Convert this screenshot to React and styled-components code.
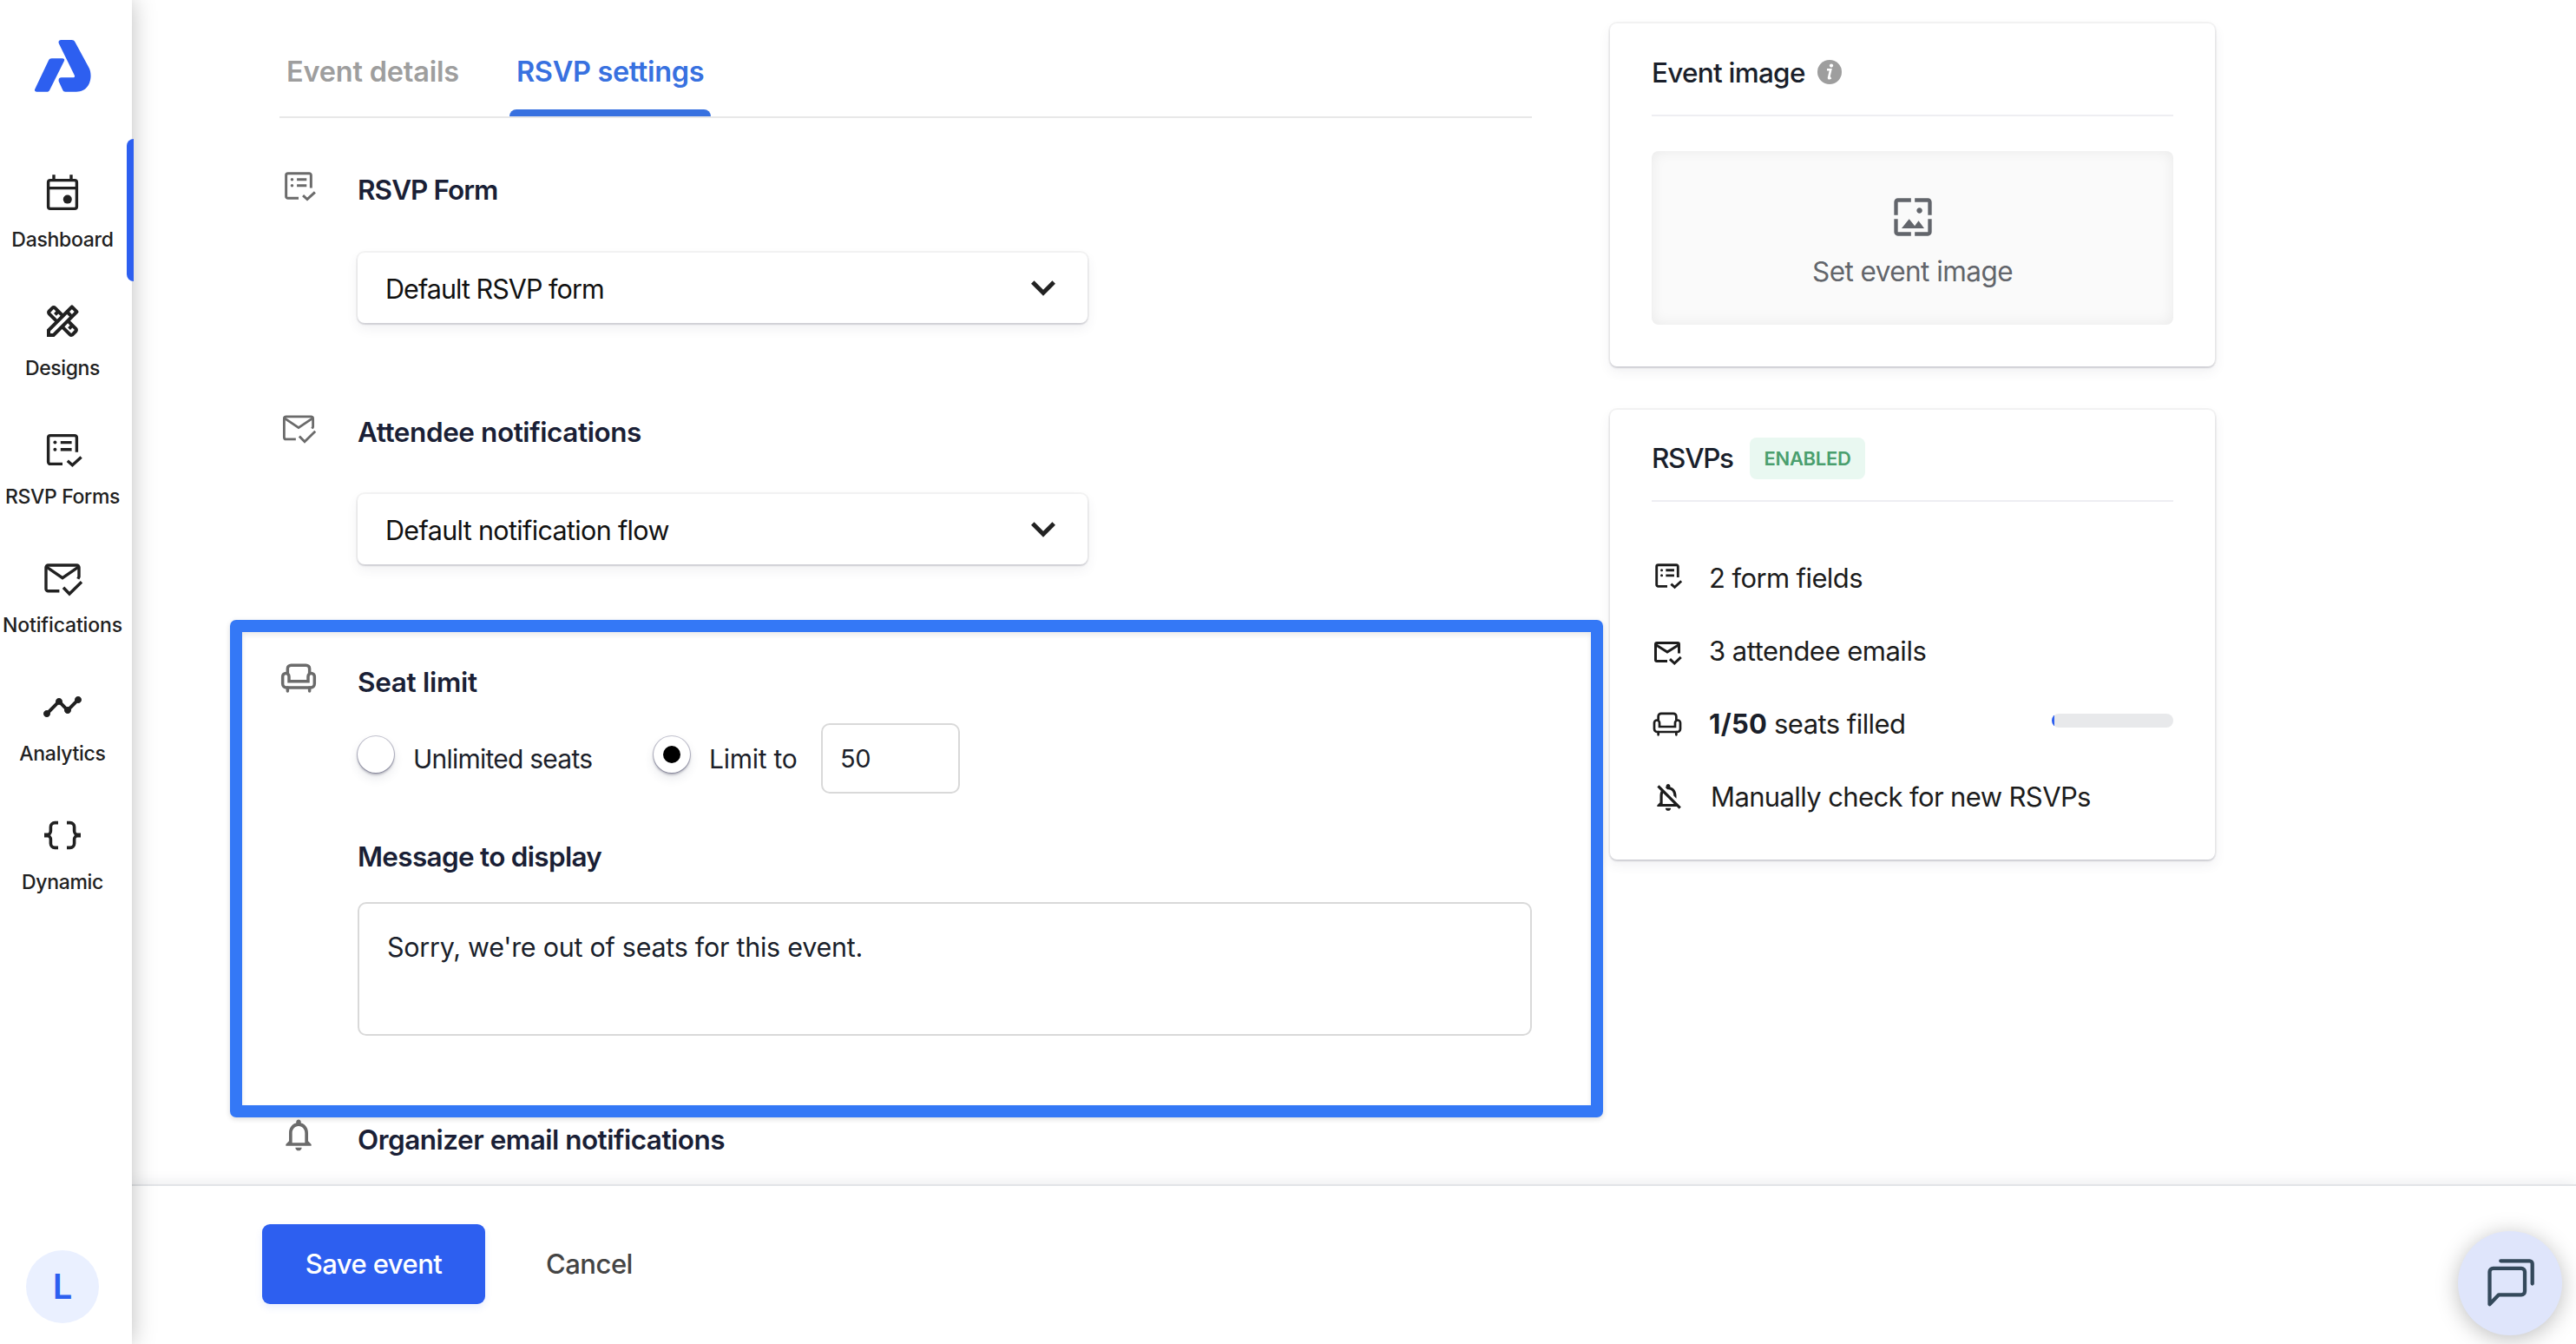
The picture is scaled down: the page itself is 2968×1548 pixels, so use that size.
import React from "react";
import styled, { createGlobalStyle } from "styled-components";
import { MdOutlineDesignServices, MdTimeline, MdWallpaper, MdNotificationsNone, MdOutlineNotificationsOff } from "react-icons/md";

const GlobalStyle = createGlobalStyle`
  * { box-sizing: border-box; }
  body { margin: 0; background: #fff; font-family: Inter, "Liberation Sans", sans-serif; color: #1a1f2b; }
  button { font-family: inherit; border: 0; background: none; padding: 0; }
  svg { display: block; flex: none; }
`;

const Page = styled.div`
  display: flex;
  width: 2968px;
  height: 1548px;
  overflow: hidden;
  position: relative;
`;

/* ---------- sidebar ---------- */
const Sidebar = styled.nav`
  width: 152px;
  flex: none;
  padding: 46px 8px 24px 0;
  display: flex;
  flex-direction: column;
  align-items: center;
  background: #fff;
  box-shadow: 0 0 26px rgba(0, 0, 0, 0.26);
  position: relative;
  z-index: 2;
`;

const LogoLink = styled.div`
  height: 122px;
  padding-left: 1px;
`;

const NavItem = styled.a`
  position: relative;
  width: 144px;
  height: 148px;
  padding-top: 30px;
  display: flex;
  flex-direction: column;
  align-items: center;
  gap: 15px;
  color: #212121;
`;

const ActiveBar = styled.span`
  position: absolute;
  top: -8px;
  right: -10px;
  width: 8px;
  height: 164px;
  border-radius: 8px 0 0 8px;
  background: #2d5ff0;
`;

const NavLabel = styled.span`
  font-size: 23px;
  line-height: 30px;
  font-weight: 450;
  white-space: nowrap;
  letter-spacing: ${(p) => p.$ls}px;
`;

const Avatar = styled.div`
  margin-top: auto;
  padding-bottom: 1px;
  width: 84px;
  height: 84px;
  border-radius: 50%;
  background: #eaf0ff;
  color: #2d5ff0;
  font-size: 40px;
  font-weight: 600;
  display: flex;
  align-items: center;
  justify-content: center;
`;

/* ---------- main ---------- */
const Main = styled.div`
  flex: 1;
  display: flex;
  flex-direction: column;
`;

const Content = styled.div`
  height: 1364px;
  padding-left: 170px;
  display: flex;
  gap: 90px;
`;

const Form = styled.main`
  width: 1443px;
`;

const Tabs = styled.div`
  display: flex;
  gap: 49px;
  height: 136px;
  border-bottom: 2px solid #e8e8e8;
`;

const Tab = styled.div`
  position: relative;
  width: ${(p) => p.$w}px;
  height: 134px;
  padding: 63px 0 0 8px;
  font-size: 32.5px;
  line-height: 40px;
  font-weight: 600;
  white-space: nowrap;
  letter-spacing: ${(p) => p.$ls}px;
  color: ${(p) => (p.$active ? "#3871e0" : "#9e9e9e")};
`;

const TabBar = styled.span`
  position: absolute;
  left: 0;
  right: 0;
  bottom: 0;
  height: 8px;
  border-radius: 8px 8px 0 0;
  background: #3871e0;
`;

const Section = styled.section`
  position: relative;
  display: grid;
  grid-template-columns: 90px 1fr;
  padding-top: ${(p) => p.$top}px;
`;

const SectionIcon = styled.div`
  margin-top: ${(p) => p.$mt || -5}px;
  width: 44px;
  display: flex;
  justify-content: center;
  color: #6b6b6b;
`;

const SectionBody = styled.div`
  display: flex;
  flex-direction: column;
`;

const Title = styled.h3`
  margin: ${(p) => p.$mt || 0}px 0 0;
  font-size: 31.5px;
  line-height: 41px;
  font-weight: 600;
  color: #1a1f36;
  white-space: nowrap;
  letter-spacing: ${(p) => p.$ls}px;
`;

const Select = styled.div`
  margin-top: ${(p) => p.$mt}px;
  width: 841px;
  height: 81px;
  padding: 1px 36px 0 32px;
  border-radius: 8px;
  background: #fff;
  box-shadow: 0 0 0 2px rgba(0, 0, 0, 0.045), 0 2px 2px rgba(40, 40, 70, 0.13), 0 6px 14px rgba(60, 66, 87, 0.08);
  display: flex;
  align-items: center;
  justify-content: space-between;
  font-size: 30.5px;
  color: #111;
  letter-spacing: ${(p) => p.$ls}px;
`;

const RadioRow = styled.div`
  margin-top: 27px;
  height: 81px;
  display: flex;
  align-items: center;
  font-size: 30px;
  color: #1c1f2a;
`;

const Radio = styled.span`
  width: 42px;
  height: 42px;
  margin-bottom: 9px;
  border-radius: 50%;
  background: #fff;
  box-shadow: 0 0 0 1px rgba(50, 50, 93, 0.28), 0 2px 3px rgba(20, 20, 50, 0.35), 0 6px 12px rgba(60, 66, 87, 0.12);
  display: flex;
  align-items: center;
  justify-content: center;
  &::after {
    content: "";
    width: 20px;
    height: 20px;
    border-radius: 50%;
    background: ${(p) => (p.$checked ? "#000" : "transparent")};
  }
`;

const RadioLabel = styled.span`
  padding-left: 22px;
  width: ${(p) => p.$w}px;
  white-space: nowrap;
  letter-spacing: ${(p) => p.$ls}px;
`;

const NumberBox = styled.div`
  width: 160px;
  height: 81px;
  border: 2px solid #d9d9d9;
  border-radius: 10px;
  padding-left: 20px;
  display: flex;
  align-items: center;
  font-size: 29px;
  letter-spacing: -0.5px;
`;

const Message = styled.div`
  margin-top: 32px;
  height: 154px;
  border: 2px solid #d9d9d9;
  border-radius: 10px;
  padding: 30px 32px;
  font-size: 30.5px;
  line-height: 40px;
  letter-spacing: ${(p) => p.$ls}px;
`;

const Highlight = styled.div`
  position: absolute;
  top: 64px;
  left: -57px;
  width: 1582px;
  height: 573px;
  border: 14px solid #3478f6;
  border-radius: 7px;
  box-shadow: 0 2px 6px rgba(0, 0, 0, 0.14), inset 0 3px 6px rgba(0, 0, 0, 0.09);
  pointer-events: none;
`;

/* ---------- right column ---------- */
const Aside = styled.aside`
  width: 697px;
  padding-top: 27px;
  display: flex;
  flex-direction: column;
  gap: 50px;
`;

const Card = styled.section`
  height: ${(p) => p.$h}px;
  padding: 0 48px;
  border-radius: 8px;
  background: #fff;
  box-shadow: 0 0 0 2px rgba(0, 0, 0, 0.045), 0 2px 2px rgba(40, 40, 70, 0.13), 0 6px 14px rgba(60, 66, 87, 0.08);
`;

const CardHeader = styled.header`
  height: ${(p) => p.$h}px;
  padding-top: 7px;
  border-bottom: 2px solid #eeeef2;
  display: flex;
  align-items: center;
  font-size: 31.5px;
  white-space: nowrap;
`;

const CardTitle = styled.span`
  width: ${(p) => p.$w}px;
  font-weight: 450;
  letter-spacing: ${(p) => p.$ls}px;
`;

const Badge = styled.span`
  width: 133px;
  height: 48px;
  border-radius: 8px;
  background: #e9f8f1;
  color: #4a9f6e;
  display: flex;
  align-items: center;
  justify-content: center;
  font-size: 22px;
  font-weight: 600;
  letter-spacing: ${(p) => p.$ls}px;
`;

const Upload = styled.button`
  margin-top: 40px;
  width: 601px;
  height: 200px;
  padding-top: 50px;
  border-radius: 8px;
  background: #fafafa;
  box-shadow: inset 0 0 16px rgba(0, 0, 0, 0.07);
  display: flex;
  flex-direction: column;
  align-items: center;
  gap: 17px;
  font-size: 31.5px;
  line-height: 40px;
  color: #62656b;
  letter-spacing: ${(p) => p.$ls}px;
`;

const Facts = styled.ul`
  list-style: none;
  margin: 45px 0 0;
  padding: 0;
`;

const Fact = styled.li`
  height: 84px;
  display: flex;
  align-items: center;
  font-size: 31px;
  color: #1c1c1c;
  white-space: nowrap;
  letter-spacing: ${(p) => p.$ls}px;
`;

const FactIcon = styled.span`
  width: ${(p) => p.$w || 66}px;
  padding-top: ${(p) => (p.$dy > 0 ? p.$dy * 2 : 0)}px;
  padding-bottom: ${(p) => (p.$dy < 0 ? -p.$dy * 2 : 0)}px;
`;

const FactCount = styled.b`
  width: 75px;
  font-weight: 700;
  color: #1a1f2b;
  letter-spacing: ${(p) => p.$ls}px;
`;

const Progress = styled.span`
  margin: 0 0 6px auto;
  width: 140px;
  height: 16px;
  border-radius: 8px;
  overflow: hidden;
  background: #e8e9eb;
  &::before {
    content: "";
    display: block;
    width: 2%;
    height: 100%;
    background: #2d5ff0;
  }
`;

/* ---------- footer ---------- */
const Footer = styled.footer`
  flex: 1;
  padding: 44px 0 0 150px;
  border-top: 2px solid #e2e4e7;
  box-shadow: 0 -2px 14px rgba(60, 66, 87, 0.1);
  background: #fff;
  position: relative;
  display: flex;
  align-items: flex-start;
  gap: 70px;
`;

const SaveButton = styled.button`
  width: 257px;
  height: 92px;
  padding-bottom: 2px;
  border-radius: 9px;
  background: #2d5ff0;
  box-shadow: 0 4px 8px rgba(45, 95, 240, 0.1);
  color: #fff;
  font-size: 31px;
  font-weight: 500;
  letter-spacing: ${(p) => p.$ls}px;
`;

const CancelButton = styled.button`
  height: 92px;
  padding-bottom: 2px;
  color: #444;
  font-size: 31px;
  font-weight: 450;
  letter-spacing: ${(p) => p.$ls}px;
`;

const ChatButton = styled.button`
  position: absolute;
  right: 16px;
  bottom: 10px;
  z-index: 3;
  width: 120px;
  height: 120px;
  border-radius: 50%;
  background: #dfe5fb;
  box-shadow: 0 4px 26px rgba(0, 0, 0, 0.26);
  display: flex;
  align-items: center;
  justify-content: center;
`;

/* ---------- icons ---------- */
const Stroke = ({ size = 48, w = 1.7, children }) => (
  <svg width={size} height={size} viewBox="0 0 24 24" fill="none" stroke="currentColor" strokeWidth={w}>
    {children}
  </svg>
);

const CalendarIcon = () => (
  <Stroke>
    <rect x="3.8" y="4.8" width="16.4" height="16.4" rx="1.2" />
    <path d="M7 1.6v3M17 1.6v3M3.8 9.3h16.4" />
    <circle cx="14.9" cy="15.8" r="2.5" fill="currentColor" stroke="none" />
  </Stroke>
);

const FormIcon = ({ size, w }) => (
  <Stroke size={size} w={w}>
    <path d="M12 20.2H5A1.2 1.2 0 0 1 3.8 19V5A1.2 1.2 0 0 1 5 3.8h14A1.2 1.2 0 0 1 20.2 5v8.4" />
    <path d="M10.9 7.8h6.4M10.9 11.9h6.4" />
    <path d="M14.9 18.4l2.8 2.5 5.1-4.7" />
    <circle cx="7.7" cy="7.8" r="1" fill="currentColor" stroke="none" />
    <circle cx="7.7" cy="11.9" r="1" fill="currentColor" stroke="none" />
  </Stroke>
);

const MailIcon = ({ size, w }) => (
  <Stroke size={size} w={w}>
    <path d="M10.2 19.4H3.8a1.3 1.3 0 0 1-1.3-1.3V5.8a1.3 1.3 0 0 1 1.3-1.3h16.4a1.3 1.3 0 0 1 1.3 1.3v5.4l-.6 1.2" />
    <path d="M2.9 5.6L12 11.8l9.1-6.2" />
    <path d="M12.5 17.4l3.5 3.6 7-6.9" />
  </Stroke>
);

const MailReadIcon = () => (
  <Stroke size={36} w={2}>
    <path d="M12 19H4a1 1 0 0 1-1-1V6a1 1 0 0 1 1-1h16a1 1 0 0 1 1 1v7" />
    <path d="M3 6.4L12 12l9-5.6" />
    <path d="M14 17.4l3.5 3.3 5-4.8" />
  </Stroke>
);

const SeatIcon = ({ size, w }) => (
  <Stroke size={size} w={w}>
    <path d="M5.1 9V6.1a2.2 2.2 0 0 1 2.2-2.2h9.4a2.2 2.2 0 0 1 2.2 2.2V9" />
    <path d="M6 14v-3a2 2 0 0 0-4 0v4.6A2.4 2.4 0 0 0 4.4 18h15.2a2.4 2.4 0 0 0 2.4-2.4V11a2 2 0 0 0-4 0v3z" />
    <path d="M5.1 18v2.2M18.9 18v2.2" strokeLinecap="round" />
  </Stroke>
);

const BracesIcon = () => (
  <Stroke w={1.8}>
    <path d="M9.5 4.8H7.6A2.4 2.4 0 0 0 5.2 7.2v2.3A2.5 2.5 0 0 1 3 12a2.5 2.5 0 0 1 2.2 2.5v2.3a2.4 2.4 0 0 0 2.4 2.4h1.9" />
    <path d="M14.5 4.8h1.9a2.4 2.4 0 0 1 2.4 2.4v2.3A2.5 2.5 0 0 0 21 12a2.5 2.5 0 0 0-2.2 2.5v2.3a2.4 2.4 0 0 1-2.4 2.4h-1.9" />
    <path d="M1.5 12h2.7M19.8 12h2.7" strokeWidth="2.6" />
  </Stroke>
);

const ChevronIcon = () => (
  <svg width="30" height="20" viewBox="0 0 30 20" fill="none" stroke="#222" strokeWidth="5">
    <path d="M2.8 3L15 15.2 27.2 3" />
  </svg>
);

const InfoIcon = () => (
  <svg width="28" height="28" viewBox="0 0 28 28">
    <circle cx="14" cy="14" r="14" fill="#9e9e9e" />
    <circle cx="16" cy="6.6" r="2.1" fill="#fff" />
    <path d="M11 11.2h4.2l-2.2 9.6q0 1.2 2.6-.4" fill="none" stroke="#fff" strokeWidth="2.6" />
  </svg>
);

const Logo = () => (
  <svg width="66" height="60" viewBox="40 46 66 60" fill="#2d5ff0">
    <path d="M59.500 67.300H72c2 0 2.700 1.500 1.800 3.100L57.200 103.800c-.7 1.400-1.700 2-3.200 2H42.300c-2 0-2.900-1.500-2-3.200L56 69.600c.8-1.500 1.800-2.300 3.500-2.300z" />
    <path d="M70.300 46h12.200c1.900 0 3 .7 4 2.400l16 29.600c4.800 9.200 1.800 27.800-14.500 27.800H75.400c-1.700 0-2.500-.7-3.200-2.200L68 94.500c-1.200-3 .1-5.200 2.800-5.200h13.300c1.800 0 2.400-1.300 1.600-2.900L68 50.500c-1.200-2.500 0-4.500 2.300-4.500z" />
  </svg>
);

const ChatIcon = () => (
  <svg width="60" height="60" viewBox="82 87.7 60 60" fill="none" stroke="#34495b" strokeWidth="4.3" strokeLinecap="round" strokeLinejoin="round">
    <path d="M88.500 142V104.500a4 4 0 0 1 4-4H125a4 4 0 0 1 4 4V127a4 4 0 0 1-4 4H99z" />
    <path d="M101.300 92h33.200a3.200 3.200 0 0 1 3.200 3.200v23" />
  </svg>
);

const NAV = [
  { label: "Dashboard", icon: <CalendarIcon />, ls: -0.3, active: true },
  { label: "Designs", icon: <MdOutlineDesignServices size={48} />, ls: -0.4 },
  { label: "RSVP Forms", icon: <FormIcon />, ls: -0.35 },
  { label: "Notifications", icon: <MailIcon />, ls: -0.15 },
  { label: "Analytics", icon: <MdTimeline size={48} />, ls: -0.3 },
  { label: "Dynamic", icon: <BracesIcon />, ls: -0.3 },
];

export default function App() {
  return (
    <Page>
      <GlobalStyle />
      <Sidebar>
        <LogoLink><Logo /></LogoLink>
        {NAV.map((item) => (
          <NavItem key={item.label}>
            {item.icon}
            <NavLabel $ls={item.ls}>{item.label}</NavLabel>
            {item.active && <ActiveBar />}
          </NavItem>
        ))}
        <Avatar>L</Avatar>
      </Sidebar>

      <Main>
        <Content>
          <Form>
            <Tabs>
              <Tab $w={216} $ls={-0.2}>Event details</Tab>
              <Tab $w={232} $ls={-0.35} $active>RSVP settings<TabBar /></Tab>
            </Tabs>

            <Section $top={62}>
              <SectionIcon><FormIcon size={42} w={1.7} /></SectionIcon>
              <SectionBody>
                <Title $ls={-0.95}>RSVP Form</Title>
                <Select $mt={52} $ls={-0.95}>Default RSVP form<ChevronIcon /></Select>
              </SectionBody>
            </Section>

            <Section $top={105}>
              <SectionIcon><MailIcon size={42} w={1.6} /></SectionIcon>
              <SectionBody>
                <Title $ls={-0.42}>Attendee notifications</Title>
                <Select $mt={51} $ls={-0.65}>Default notification flow<ChevronIcon /></Select>
              </SectionBody>
            </Section>

            <Section $top={115}>
              <Highlight />
              <SectionIcon $mt={-6}><SeatIcon size={44} w={1.9} /></SectionIcon>
              <SectionBody>
                <Title $ls={-0.3}>Seat limit</Title>
                <RadioRow>
                  <Radio />
                  <RadioLabel $w={299} $ls={-0.77}>Unlimited seats</RadioLabel>
                  <Radio $checked />
                  <RadioLabel $w={151} $ls={-0.25}>Limit to</RadioLabel>
                  <NumberBox>50</NumberBox>
                </RadioRow>
                <Title $mt={52} $ls={-0.7}>Message to display</Title>
                <Message $ls={-0.27}>Sorry, we're out of seats for this event.</Message>
              </SectionBody>
            </Section>

            <Section $top={99}>
              <SectionIcon $mt={-7}><MdNotificationsNone size={44} /></SectionIcon>
              <SectionBody>
                <Title $ls={-0.5}>Organizer email notifications</Title>
              </SectionBody>
            </Section>
          </Form>

          <Aside>
            <Card $h={395}>
              <CardHeader $h={107}>
                <CardTitle $w={191} $ls={-0.75}>Event image</CardTitle>
                <InfoIcon />
              </CardHeader>
              <Upload $ls={-0.55}>
                <MdWallpaper size={52} />
                Set event image
              </Upload>
            </Card>

            <Card $h={518}>
              <CardHeader $h={106}>
                <CardTitle $w={113} $ls={-1.3}>RSVPs</CardTitle>
                <Badge $ls={-0.3}>ENABLED</Badge>
              </CardHeader>
              <Facts>
                <Fact $ls={-0.6}>
                  <FactIcon $dy={-2}><FormIcon size={36} w={1.9} /></FactIcon>
                  2 form fields
                </Fact>
                <Fact $ls={-0.5}>
                  <FactIcon $dy={2}><MailReadIcon /></FactIcon>
                  3 attendee emails
                </Fact>
                <Fact $ls={-0.55}>
                  <FactIcon $dy={1}><SeatIcon size={36} w={1.8} /></FactIcon>
                  <FactCount $ls={0.3}>1/50</FactCount>
                  seats filled
                  <Progress />
                </Fact>
                <Fact $ls={-0.62}>
                  <FactIcon $w={68} $dy={1}><MdOutlineNotificationsOff size={38} /></FactIcon>
                  Manually check for new RSVPs
                </Fact>
              </Facts>
            </Card>
          </Aside>
        </Content>

        <Footer>
          <SaveButton $ls={-0.55}>Save event</SaveButton>
          <CancelButton $ls={-0.5}>Cancel</CancelButton>
        </Footer>
      </Main>

      <ChatButton><ChatIcon /></ChatButton>
    </Page>
  );
}
